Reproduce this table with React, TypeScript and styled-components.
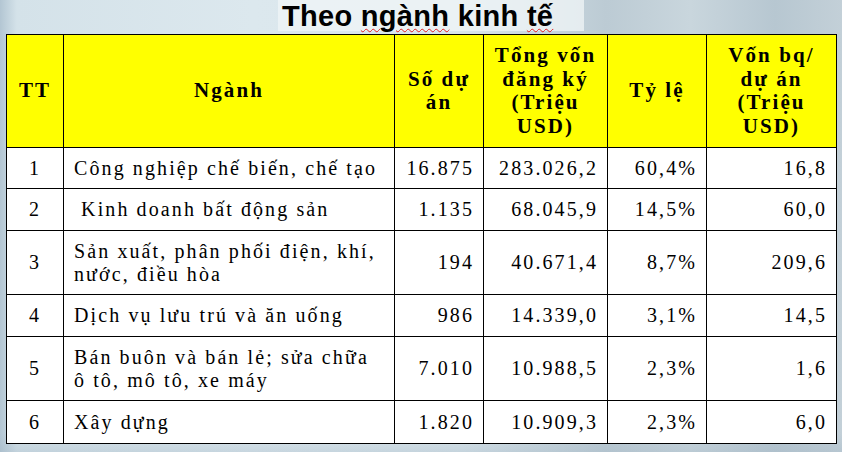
import React from 'react';
import styled, { createGlobalStyle } from 'styled-components';

const GlobalStyle = createGlobalStyle`
  html, body {
    margin: 0;
    padding: 0;
  }
  body {
    width: 842px;
    height: 452px;
    overflow: hidden;
  }
`;

const Page = styled.div`
  width: 842px;
  height: 452px;
  display: flex;
  flex-direction: column;
  background:
    linear-gradient(180deg, rgba(255, 255, 255, 0) 0%, rgba(255, 255, 255, 0) 96%, rgba(160, 180, 195, 0.35) 100%),
    linear-gradient(90deg, #b3c6d3 0%, #d4e2e9 2%, #dce8ee 30%, #d9e5eb 55%, #bccbd4 72%, #c9d6dd 82%, #b7c7d1 92%, #c3d0d8 100%);
`;

const TitleBar = styled.div`
  height: 34px;
  display: flex;
  align-items: flex-start;
  padding-left: 278px;
`;

const Title = styled.h1`
  margin: 0;
  height: 31px;
  padding: 0 31px 0 4px;
  background: rgba(240, 245, 247, 0.75);
  font-family: 'Liberation Sans', Arial, sans-serif;
  font-weight: 700;
  font-size: 29px;
  letter-spacing: 0.3px;
  line-height: normal;
  color: #000;
  white-space: nowrap;
`;

const Spell = styled.span`
  text-decoration: underline wavy #e02020;
  text-decoration-thickness: 1px;
  text-underline-offset: 2px;
`;

const Table = styled.table`
  margin-left: 6px;
  width: 830px;
  border-collapse: collapse;
  table-layout: fixed;
  font-family: 'Liberation Serif', 'Times New Roman', serif;
  color: #000;
`;

const HeadRow = styled.tr`
  height: 113px;
  background: #ffff00;
`;

const Row = styled.tr<{ $h: number }>`
  height: ${(p) => p.$h}px;
  background: #fff;
`;

const HeadCell = styled.th`
  border: 1px solid #000;
  padding: 0 4px;
  font-size: 21px;
  font-weight: 700;
  letter-spacing: 2.1px;
  line-height: 23.5px;
  text-align: center;
  vertical-align: middle;
  white-space: nowrap;
`;

const Cell = styled.td<{ $align?: 'left' | 'center' | 'right' }>`
  border: 1px solid #000;
  padding: ${(p) => (p.$align === 'left' ? '0 0 0 10px' : p.$align === 'center' ? '0' : '0 9px 0 0')};
  font-size: 20px;
  letter-spacing: 2.1px;
  line-height: 23px;
  text-align: ${(p) => p.$align || 'right'};
  vertical-align: middle;
  white-space: pre;
`;

type Item = {
  tt: string;
  name: React.ReactNode;
  count: string;
  capital: string;
  share: string;
  avg: string;
  h: number;
};

const rows: Item[] = [
  { tt: '1', name: 'Công nghiệp chế biến, chế tạo', count: '16.875', capital: '283.026,2', share: '60,4%', avg: '16,8', h: 41 },
  { tt: '2', name: ' Kinh doanh bất động sản', count: '1.135', capital: '68.045,9', share: '14,5%', avg: '60,0', h: 42 },
  { tt: '3', name: <>Sản xuất, phân phối điện, khí,<br />nước, điều hòa</>, count: '194', capital: '40.671,4', share: '8,7%', avg: '209,6', h: 64 },
  { tt: '4', name: 'Dịch vụ lưu trú và ăn uống', count: '986', capital: '14.339,0', share: '3,1%', avg: '14,5', h: 42 },
  { tt: '5', name: <>Bán buôn và bán lẻ; sửa chữa<br />ô tô, mô tô, xe máy</>, count: '7.010', capital: '10.988,5', share: '2,3%', avg: '1,6', h: 64 },
  { tt: '6', name: 'Xây dựng', count: '1.820', capital: '10.909,3', share: '2,3%', avg: '6,0', h: 43 },
];

export default function App() {
  return (
    <Page>
      <GlobalStyle />
      <TitleBar>
        <Title>
          Theo <Spell>ngành</Spell> kinh <Spell>tế</Spell>
        </Title>
      </TitleBar>
      <Table>
        <colgroup>
          <col style={{ width: 57 }} />
          <col style={{ width: 331 }} />
          <col style={{ width: 89 }} />
          <col style={{ width: 124 }} />
          <col style={{ width: 99 }} />
          <col style={{ width: 130 }} />
        </colgroup>
        <thead>
          <HeadRow>
            <HeadCell>TT</HeadCell>
            <HeadCell>Ngành</HeadCell>
            <HeadCell>Số dự<br />án</HeadCell>
            <HeadCell>Tổng vốn<br />đăng ký<br />(Triệu<br />USD)</HeadCell>
            <HeadCell>Tỷ lệ</HeadCell>
            <HeadCell>Vốn bq/<br />dự án<br />(Triệu<br />USD)</HeadCell>
          </HeadRow>
        </thead>
        <tbody>
          {rows.map((r) => (
            <Row key={r.tt} $h={r.h}>
              <Cell $align="center">{r.tt}</Cell>
              <Cell $align="left">{r.name}</Cell>
              <Cell>{r.count}</Cell>
              <Cell>{r.capital}</Cell>
              <Cell>{r.share}</Cell>
              <Cell>{r.avg}</Cell>
            </Row>
          ))}
        </tbody>
      </Table>
    </Page>
  );
}
